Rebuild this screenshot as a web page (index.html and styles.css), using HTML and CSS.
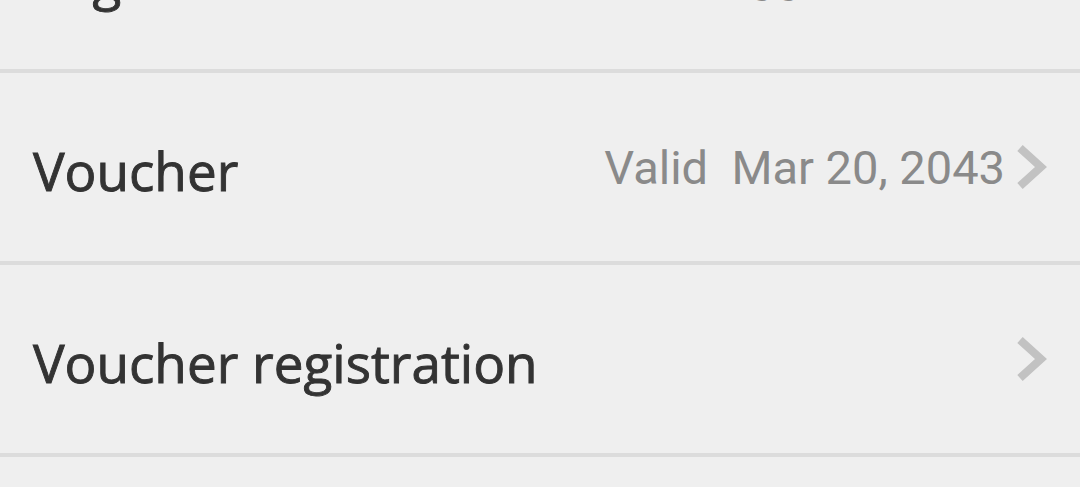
FILE: index.html
```html
<!DOCTYPE html>
<html lang="en">
<head>
<meta charset="UTF-8">
<meta name="viewport" content="width=device-width, initial-scale=1.0">
<title>Settings</title>
<link rel="stylesheet" href="styles.css">
</head>
<body>

<!-- Settings list -->
<ul class="settings">
    <li class="row">
        <span class="label">Login</span>
        <span class="value">Logged in user</span>
        <svg class="chevron" viewBox="0 0 32 46"><polyline points="5,4 26,23 5,42"/></svg>
    </li>
    <li class="row">
        <span class="label">Voucher</span>
        <span class="value">Valid&nbsp;&nbsp;Mar 20, 2043</span>
        <svg class="chevron" viewBox="0 0 32 46"><polyline points="5,4 26,23 5,42"/></svg>
    </li>
    <li class="row">
        <span class="label">Voucher registration</span>
        <svg class="chevron" viewBox="0 0 32 46"><polyline points="5,4 26,23 5,42"/></svg>
    </li>
</ul>

</body>
</html>
```

FILE: styles.css
```css
body {
    margin: 0;
    padding: 0;
    background-color: #efefef;
    overflow: hidden;
}

.settings {
    list-style: none;
    margin: -119px 0 0 0;
    padding: 0;
}

.row {
    display: flex;
    align-items: center;
    height: 188px;
    padding: 0 33px;
    border-bottom: 4px solid #dcdcdc;
}

.label {
    flex: 1;
    padding-top: 7px;
    font-family: 'Open Sans', 'Noto Sans', sans-serif;
    font-size: 53px;
    color: #333;
    -webkit-text-stroke: 0.9px #333;
}

.value {
    font-family: 'Roboto', sans-serif;
    font-size: 47px;
    color: #8a8a8a;
}

.chevron {
    width: 32px;
    height: 46px;
    margin-left: 10px;
    fill: none;
    stroke: #c2c2c2;
    stroke-width: 8;
    stroke-linejoin: miter;
}
```
